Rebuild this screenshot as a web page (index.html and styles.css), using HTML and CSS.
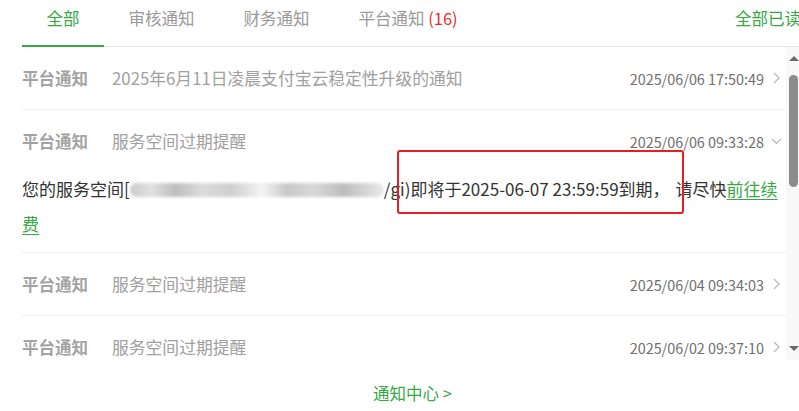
FILE: index.html
```html
<!DOCTYPE html>
<html lang="zh-CN">
<head>
<meta charset="utf-8">
<title>通知</title>
<link rel="stylesheet" href="styles.css">
</head>
<body>
<div class="page">
  <div class="tabs">
    <div class="tab active">全部</div>
    <div class="tab">审核通知</div>
    <div class="tab">财务通知</div>
    <div class="tab">平台通知 <span class="count">(16)</span></div>
    <div class="read-all">全部已读</div>
  </div>

  <div class="scroll">
    <div class="list">
      <div class="row">
        <div class="row-head">
          <span class="label">平台通知</span>
          <span class="title">2025年6月11日凌晨支付宝云稳定性升级的通知</span>
          <span class="date">2025/06/06 17:50:49</span>
          <span class="chev"><svg width="7" height="12" viewBox="0 0 7 12"><polyline points="1,1 6,6 1,11" fill="none" stroke="#b8b8b8" stroke-width="1.2"/></svg></span>
        </div>
      </div>
      <div class="row">
        <div class="row-head">
          <span class="label">平台通知</span>
          <span class="title">服务空间过期提醒</span>
          <span class="date">2025/06/06 09:33:28</span>
          <span class="chev"><svg width="11" height="7" viewBox="0 0 11 7"><polyline points="1,1 5.5,5.5 10,1" fill="none" stroke="#b8b8b8" stroke-width="1.2"/></svg></span>
        </div>
        <div class="row-body">您的服务空间[<span class="blur"></span>/gi)即将于2025-06-07 23:59:59到期<span class="comma">，</span>请尽快<a class="link" href="#">前往续费</a></div>
      </div>
      <div class="row">
        <div class="row-head">
          <span class="label">平台通知</span>
          <span class="title">服务空间过期提醒</span>
          <span class="date">2025/06/04 09:34:03</span>
          <span class="chev"><svg width="7" height="12" viewBox="0 0 7 12"><polyline points="1,1 6,6 1,11" fill="none" stroke="#b8b8b8" stroke-width="1.2"/></svg></span>
        </div>
      </div>
      <div class="row">
        <div class="row-head">
          <span class="label">平台通知</span>
          <span class="title">服务空间过期提醒</span>
          <span class="date">2025/06/02 09:37:10</span>
          <span class="chev"><svg width="7" height="12" viewBox="0 0 7 12"><polyline points="1,1 6,6 1,11" fill="none" stroke="#b8b8b8" stroke-width="1.2"/></svg></span>
        </div>
      </div>
    </div>
    <div class="scrollbar">
      <div class="arrow-up"></div>
      <div class="thumb"></div>
      <div class="arrow-down"></div>
    </div>
  </div>

  <div class="footer"><a class="center-link" href="#">通知中心 &gt;</a></div>

  <div class="mark"></div>
</div>
</body>
</html>
```
FILE: styles.css
```css
* { box-sizing: border-box; }
html, body { margin: 0; padding: 0; background: #fff; overflow: hidden; }
body {
  font-family: "Noto Sans CJK SC", "Noto Sans", sans-serif;
  font-size: 16.5px;
  color: #333;
}
.page {
  position: relative;
  width: 801px;
  height: 411px;
}
.tabs {
  display: flex;
  align-items: flex-start;
  margin-left: 22px;
  height: 47px;
  border-bottom: 1px solid #e6e6e6;
}
.tab {
  height: 47px;
  padding: 0 24.5px;
  line-height: 36px;
  color: #9a9a9a;
  white-space: nowrap;
  border-bottom: 2px solid transparent;
}
.tab.active {
  color: #36a844;
  border-bottom-color: #36a844;
}
.count { color: #f0282d; }
.read-all {
  margin-left: auto;
  line-height: 36px;
  color: #36a844;
  white-space: nowrap;
}
.scroll {
  display: flex;
  height: 313px;
  overflow: hidden;
}
.list {
  flex: 1;
  padding-left: 22px;
}
.row {
  border-bottom: 1px solid #efeff4;
}
.row-head {
  display: flex;
  align-items: center;
  height: 62px;
}
.label {
  width: 90px;
  font-weight: 700;
  color: #a3a3a3;
}
.title {
  font-size: 16.8px;
  color: #a0a0a0;
}
.date {
  margin-left: auto;
  font-size: 14.4px;
  color: #6f6f6f;
}
.chev {
  width: 22px;
  display: flex;
  justify-content: center;
  padding-left: 2px;
}
.row-body {
  font-size: 17px;
  line-height: 35px;
  padding-bottom: 11px;
  margin-top: -1px;
  color: #333;
}
.comma {
  display: inline-block;
  width: 23px;
}
.blur {
  display: inline-block;
  width: 254px;
  height: 14px;
  vertical-align: -1px;
  border-radius: 7px;
  background: linear-gradient(90deg, #c9c9c9 0%, #e2e2e2 8%, #bdbdbd 18%, #dcdcdc 28%, #cfcfcf 40%, #f4f4f4 52%, #c7c7c7 62%, #d9d9d9 72%, #bcbcbc 84%, #e9e9e9 100%);
  filter: blur(1.5px);
}
.link {
  color: #36a844;
  text-decoration: underline;
  text-underline-offset: 3px;
}
.scrollbar {
  width: 15px;
  background: #f8f8f8;
  display: flex;
  flex-direction: column;
  align-items: center;
}
.arrow-up {
  margin-top: 9px;
  width: 0; height: 0;
  border-left: 5px solid transparent;
  border-right: 5px solid transparent;
  border-bottom: 5px solid #6a6a6a;
}
.thumb {
  margin-top: 14px;
  width: 9px;
  height: 112px;
  border-radius: 5px;
  background: #8c8c8c;
}
.arrow-down {
  margin-top: auto;
  margin-bottom: 9px;
  width: 0; height: 0;
  border-left: 5px solid transparent;
  border-right: 5px solid transparent;
  border-top: 5px solid #6a6a6a;
}
.footer {
  display: flex;
  justify-content: center;
  padding-top: 22px;
  line-height: 22px;
  padding-left: 24px;
}
.center-link {
  color: #36a844;
  text-decoration: none;
}
.mark {
  position: absolute;
  left: 397px;
  top: 150px;
  width: 287px;
  height: 64px;
  border: 2px solid #ec1c24;
  border-radius: 3px;
}
```
